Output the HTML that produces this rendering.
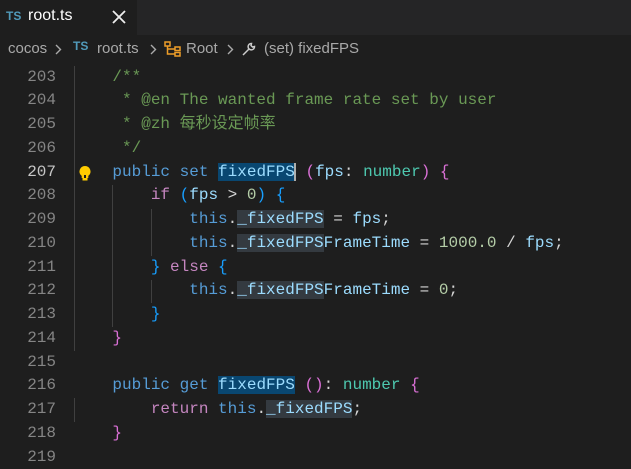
<!DOCTYPE html><html style="overflow:hidden"><head><style>
html,body{margin:0;width:631px;height:455px;overflow:hidden;background:#1e1e1e;font-family:"Liberation Sans",sans-serif}
.tabs{height:35px;background:#252526;position:relative}
.tab{position:absolute;left:0;top:0;width:137px;height:35px;background:#1e1e1e;color:#fff;font-size:16px}
.bc{position:absolute;top:35px;left:0;right:0;height:28px;background:#1e1e1e;color:#a9a9a9;font-size:15px;line-height:28px;white-space:nowrap}
.bc>*{position:absolute;top:0}
.ts{color:#519aba;font-weight:bold;font-size:12px}
.ed{position:absolute;top:65.5px;left:0;right:0;font-family:"Liberation Mono",monospace;font-size:16px}
.l{height:23.75px;line-height:23.75px;position:relative;white-space:pre;overflow:hidden}
.n{position:absolute;right:575px;color:#858585;text-align:right}
.c{position:absolute;left:74px;color:#d4d4d4}
.k{color:#569cd6}.p{color:#c586c0}.v{color:#9cdcfe}.t{color:#4ec9b0}.m{color:#b5cea8}.g{color:#6a9955}
.o{color:#da70d6}.b{color:#179fff}
.h{background:#343a40}.s{background:#094771}
.gd{position:absolute;width:1px;background:#404040}
</style></head><body>
<div class="tabs"><div class="tab"><span class="ts" style="position:absolute;left:6px;top:9px">TS</span><span style="position:absolute;left:28px;top:7px">root.ts</span><svg style="position:absolute;left:112px;top:10px" width="14" height="14" viewBox="0 0 14 14"><path d="M1 1L13 13M13 1L1 13" stroke="#eee" stroke-width="1.8"/></svg></div></div>
<div class="bc">
<span style="left:8px">cocos</span>
<svg style="left:55px;top:9px" width="7" height="11" viewBox="0 0 7 11"><path d="M1 1l4.5 4.5L1 10" fill="none" stroke="#aaa" stroke-width="1.4"/></svg>
<span class="ts" style="left:73px;top:-3px">TS</span>
<span style="left:97px">root.ts</span>
<svg style="left:150px;top:9px" width="7" height="11" viewBox="0 0 7 11"><path d="M1 1l4.5 4.5L1 10" fill="none" stroke="#aaa" stroke-width="1.4"/></svg>
<svg style="left:164px;top:6px" width="18" height="16" viewBox="0 0 18 16"><g fill="none" stroke="#ee9d28" stroke-width="1.5"><rect x="1" y="1" width="5" height="4"/><rect x="11" y="6" width="5" height="3.5"/><rect x="11" y="11.5" width="5" height="3.5"/><path d="M3.5 5v8h7.5M3.5 8h7.5"/></g></svg>
<span style="left:186px">Root</span>
<svg style="left:227px;top:9px" width="7" height="11" viewBox="0 0 7 11"><path d="M1 1l4.5 4.5L1 10" fill="none" stroke="#aaa" stroke-width="1.4"/></svg>
<svg style="left:241px;top:6px" width="16" height="16" viewBox="0 0 16 16"><path d="M2 14l6-6M10.5 2.5a3.2 3.2 0 1 0 3 3l-2 .5-1.5-1.5.5-2z" fill="none" stroke="#ccc" stroke-width="1.5"/></svg>
<span style="left:264px">(set) fixedFPS</span>
</div>
<div class="ed">
<div class="gd" style="left:74px;top:0;height:285px"></div>
<div class="gd" style="left:112px;top:119px;height:142px"></div>
<div class="gd" style="left:151px;top:143px;height:47px"></div>
<div class="gd" style="left:151px;top:214px;height:23px"></div>
<div class="gd" style="left:74px;top:332px;height:24px"></div>
<div class="l"><span class="n">203</span><span class="c g">    /**</span></div>
<div class="l"><span class="n">204</span><span class="c g">     * @en The wanted frame rate set by user</span></div>
<div class="l"><span class="n">205</span><span class="c g" style="font-family:'Liberation Mono','Noto Sans CJK SC',monospace">     * @zh 每秒设定帧率</span></div>
<div class="l"><span class="n">206</span><span class="c g">     */</span></div>
<div class="l"><span class="n" style="color:#c6c6c6">207</span><svg style="position:absolute;left:78px;top:4px" width="14" height="16" viewBox="0 0 14 16"><path d="M7 1a5.5 5.5 0 0 0-3.3 9.9V13h6.6v-2.1A5.5 5.5 0 0 0 7 1z" fill="#ffcc00"/><rect x="4.5" y="13" width="5" height="2.5" fill="#ffcc00"/><rect x="6" y="10" width="2" height="3" fill="#1e1e1e"/></svg><span class="c">    <span class="k">public set </span><span class="v s">fixedFPS</span><span style="border-left:2px solid #aeafad;margin-left:-1px"></span> <span class="o">(</span><span class="v">fps</span>: <span class="t">number</span><span class="o">)</span> <span class="o">{</span></span></div>
<div class="l"><span class="n">208</span><span class="c">        <span class="p">if</span> <span class="b">(</span><span class="v">fps</span> &gt; <span class="m">0</span><span class="b">)</span> <span class="b">{</span></span></div>
<div class="l"><span class="n">209</span><span class="c">            <span class="k">this</span>.<span class="v"><span class="h">_fixedFPS</span> </span>= <span class="v">fps</span>;</span></div>
<div class="l"><span class="n">210</span><span class="c">            <span class="k">this</span>.<span class="v"><span class="h">_fixedFPS</span>FrameTime</span> = <span class="m">1000.0</span> / <span class="v">fps</span>;</span></div>
<div class="l"><span class="n">211</span><span class="c">        <span class="b">}</span> <span class="p">else</span> <span class="b">{</span></span></div>
<div class="l"><span class="n">212</span><span class="c">            <span class="k">this</span>.<span class="v"><span class="h">_fixedFPS</span>FrameTime</span> = <span class="m">0</span>;</span></div>
<div class="l"><span class="n">213</span><span class="c">        <span class="b">}</span></span></div>
<div class="l"><span class="n">214</span><span class="c">    <span class="o">}</span></span></div>
<div class="l"><span class="n">215</span></div>
<div class="l"><span class="n">216</span><span class="c">    <span class="k">public get </span><span class="v s">fixedFPS</span> <span class="o">()</span>: <span class="t">number</span> <span class="o">{</span></span></div>
<div class="l"><span class="n">217</span><span class="c">        <span class="p">return</span> <span class="k">this</span>.<span class="v h">_fixedFPS</span>;</span></div>
<div class="l"><span class="n">218</span><span class="c">    <span class="o">}</span></span></div>
<div class="l"><span class="n">219</span></div>
</div>
</body></html>
